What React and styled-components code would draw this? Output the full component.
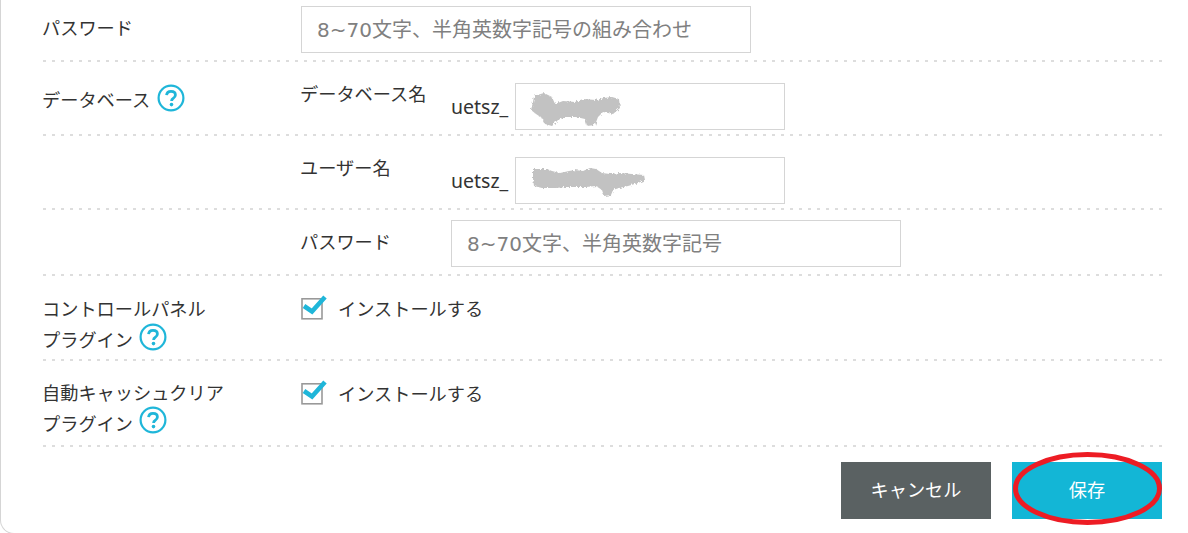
import styled, { createGlobalStyle } from "styled-components";

const Global = createGlobalStyle`
  html, body {
    margin: 0;
    padding: 0;
    background: #fff;
    overflow: hidden;
  }
  body {
    font-family: "Noto Sans CJK JP", sans-serif;
    font-size: 18.2px;
    color: #333;
  }
`;

const Page = styled.div`
  position: relative;
  height: 533px;
  overflow: hidden;
`;

const Panel = styled.div`
  width: 1188px;
  height: 534px;
  box-sizing: border-box;
  background: #fff;
  border-left: 1px solid #d5d5d5;
  border-bottom: 1px solid #d5d5d5;
  border-bottom-left-radius: 14px;
  padding: 0 26px 0 42px;
`;

const Row = styled.div`
  display: grid;
  grid-template-columns: 258px 1fr;
  box-sizing: border-box;
  height: ${(p) => p.$h}px;
  background-image: linear-gradient(to right, #ddd 3px, transparent 3px);
  background-size: 9px 2px;
  background-repeat: repeat-x;
  background-position: left bottom;
`;

const Label = styled.div`
  padding-top: ${(p) => p.$top}px;
  margin-left: -1px;
  line-height: 31px;
  white-space: nowrap;
`;

const Field = styled.div`
  display: flex;
  align-items: flex-start;
  padding-top: ${(p) => p.$top}px;
`;

const SubLabel = styled.div`
  width: 150px;
  margin-left: -1px;
  margin-right: 1px;
  line-height: 31px;
  margin-top: ${(p) => p.$top}px;
  white-space: nowrap;
`;

const Prefix = styled.span`
  width: 64px;
  line-height: 47px;
  margin-top: 15px;
  font-family: "Noto Sans", sans-serif;
  font-size: 19.5px;
`;

const InputWrap = styled.div`
  position: relative;
  margin-top: ${(p) => p.$top || 0}px;
`;

const Input = styled.input`
  display: block;
  box-sizing: border-box;
  width: ${(p) => p.$w}px;
  height: 47px;
  padding: 0 15px;
  border: 1px solid #d5d5d5;
  border-radius: 0;
  outline: none;
  background: #fff;
  font: inherit;
  font-family: "DejaVu Sans", "Noto Sans CJK JP", sans-serif;
  font-size: 20px;
  color: #333;
  &::placeholder {
    color: #808080;
    opacity: 1;
  }
`;

const Smudge = styled.svg`
  position: absolute;
  left: 12px;
  top: 5px;
`;

const HelpWrap = styled.svg`
  display: inline-block;
  vertical-align: ${(p) => p.$shift}px;
  margin: -8px 0 -8px ${(p) => p.$gap}px;
`;

const CheckRow = styled.label`
  display: flex;
  align-items: flex-start;
  gap: 11px;
  padding-top: 17px;
  line-height: 31px;
`;

const CheckIcon = styled.svg`
  display: block;
  margin-top: 2px;
  flex: none;
`;

const Actions = styled.div`
  display: flex;
  justify-content: flex-end;
  gap: 21px;
  padding-top: 15px;
`;

const Button = styled.button`
  width: 150px;
  height: 57px;
  padding: 0 0 3px;
  border: none;
  border-radius: 0;
  background: ${(p) => p.$bg};
  color: #fff;
  font: inherit;
  cursor: pointer;
`;

const Circle = styled.svg`
  position: absolute;
  left: 1007px;
  top: 449px;
  pointer-events: none;
`;

const Help = ({ shift = 3, gap = 7 }) => (
  <HelpWrap $shift={shift} $gap={gap} width="28" height="28" viewBox="0 0 28 28">
    <circle cx="14" cy="14" r="12.4" fill="none" stroke="#1fb6d9" strokeWidth="2.2" />
    <path
      d="M9.6 11.2c.2-2.6 2-3.9 4.4-3.9 2.5 0 4.4 1.4 4.4 3.7 0 1.8-1 2.6-2.2 3.4-1.1.7-1.6 1.2-1.6 2.5"
      fill="none"
      stroke="#1fb6d9"
      strokeWidth="2.8"
    />
    <circle cx="14.5" cy="20.6" r="1.8" fill="#1fb6d9" />
  </HelpWrap>
);

const Check = () => (
  <CheckIcon width="26" height="25" viewBox="0 0 26 25">
    <rect x="1" y="3.8" width="20" height="20" fill="#fff" stroke="#999" strokeWidth="1.6" />
    <path d="M3 11 11 16.5 24 2" fill="none" stroke="#1fb6d9" strokeWidth="4.6" />
  </CheckIcon>
);

const Install = () => (
  <CheckRow>
    <Check />
    インストールする
  </CheckRow>
);

const Blot = ({ w, h, d }) => (
  <Smudge width={w} height={h} viewBox={`0 0 ${w} ${h}`}>
    <filter id="rough" x="-5%" y="-10%" width="110%" height="120%">
      <feTurbulence type="fractalNoise" baseFrequency="0.45" numOctaves="2" seed="4" />
      <feDisplacementMap in="SourceGraphic" scale="4" />
    </filter>
    <path fill="#c2c2c2" filter="url(#rough)" d={d} />
  </Smudge>
);

export default function App() {
  return (
    <Page>
      <Global />
      <Panel>
        <Row $h={62}>
          <Label $top={12}>パスワード</Label>
          <Field $top={6}>
            <Input $w={450} readOnly placeholder="8~70文字、半角英数字記号の組み合わせ" />
          </Field>
        </Row>
        <Row $h={74}>
          <Label $top={22}>
            データベース
            <Help />
          </Label>
          <Field $top={6}>
            <SubLabel $top={10}>データベース名</SubLabel>
            <Prefix>uetsz_</Prefix>
            <InputWrap $top={15}>
              <Input $w={270} readOnly />
              <Blot
                w={104}
                h={38}
                d="M7 8 17 5l8 4 3 7 8-3 12 1 8-3 13 1 8-2 8-1 7 2 1 9-7 6-10-2-5 5-3 8-8 1-2-7-9-2-11 0-7 3-6 6-7-2-3-6-6-4-5-4 2-8Z"
              />
            </InputWrap>
          </Field>
        </Row>
        <Row $h={74}>
          <Label $top={0} />
          <Field $top={6}>
            <SubLabel $top={10}>ユーザー名</SubLabel>
            <Prefix>uetsz_</Prefix>
            <InputWrap $top={15}>
              <Input $w={270} readOnly />
              <Blot
                w={124}
                h={38}
                d="M6 7h14l5 2 8 2 9-2 6-1 8 1 7-3 6 1 6 4 8 1 10-1 12 1 12 1 1 5-7 3-10 3-9 2-6 2-2 5-7 1-2-6-6-4-10 1-12 0-9 0-9 1-14 0-8-2-1-7Z"
              />
            </InputWrap>
          </Field>
        </Row>
        <Row $h={66}>
          <Label $top={0} />
          <Field $top={10}>
            <SubLabel $top={6}>パスワード</SubLabel>
            <Input $w={450} readOnly placeholder="8~70文字、半角英数字記号" />
          </Field>
        </Row>
        <Row $h={85}>
          <Label $top={17}>
            コントロールパネル
            <br />
            プラグイン
            <Help shift={4} gap={6} />
          </Label>
          <Install />
        </Row>
        <Row $h={86}>
          <Label $top={16}>
            自動キャッシュクリア
            <br />
            プラグイン
            <Help shift={5} gap={6} />
          </Label>
          <Install />
        </Row>
        <Actions>
          <Button $bg="#5a6162">キャンセル</Button>
          <Button $bg="#13b6d6">保存</Button>
        </Actions>
      </Panel>
      <Circle width="156" height="80" viewBox="0 0 156 80">
        <ellipse cx="80.5" cy="39.5" rx="72" ry="34" fill="none" stroke="#ed1c24" strokeWidth="5" />
      </Circle>
    </Page>
  );
}
